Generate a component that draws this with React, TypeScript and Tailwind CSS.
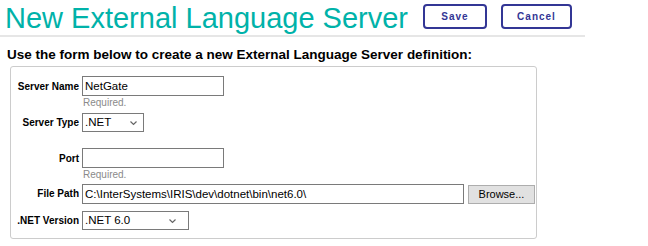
import React, { useState } from 'react';

const font = { fontFamily: '"Liberation Sans", Arial, sans-serif' };

function Chevron({ right }: { right: string }) {
  return (
    <svg
      className={`pointer-events-none absolute top-1/2 -translate-y-1/2 ${right}`}
      width="7"
      height="5"
      viewBox="0 0 7 5"
    >
      <path d="M0.5 1 L3.5 4 L6.5 1" fill="none" stroke="#666" strokeWidth="1.2" />
    </svg>
  );
}

function Label({ children }: { children: React.ReactNode }) {
  return (
    <div className="w-[68px] shrink-0 text-right text-[10px] font-bold text-black whitespace-nowrap">
      {children}
    </div>
  );
}

export default function App() {
  const [name, setName] = useState('NetGate');
  const [port, setPort] = useState('');
  const [path, setPath] = useState('C:\\InterSystems\\IRIS\\dev\\dotnet\\bin\\net6.0\\');

  return (
    <div className="w-[648px] h-[246px] bg-white overflow-hidden" style={font}>
      {/* header */}
      <div className="flex items-start w-[585px] h-[37px] border-b-2 border-[#e6e6e6]">
        <h1 className="pl-[5px] mt-[2px] text-[29px] leading-[32px] font-normal text-[#00b2a9] whitespace-nowrap">
          New External Language Server
        </h1>
        <div className="flex gap-[14px] ml-[15px] mt-[4px]">
          <button className="w-[64px] h-[25px] border-2 border-[#333695] rounded-[4px] text-[10px] font-bold tracking-[1px] text-[#333695] bg-white">
            Save
          </button>
          <button className="w-[71px] h-[25px] border-2 border-[#333695] rounded-[4px] text-[10px] font-bold tracking-[1px] text-[#333695] bg-white">
            Cancel
          </button>
        </div>
      </div>

      <p className="mt-[10px] pl-[7px] text-[13.5px] leading-[16px] font-bold text-black whitespace-nowrap">
        Use the form below to create a new External Language Server definition:
      </p>

      <div className="ml-[10px] mt-[3px] w-[527px] h-[173px] border border-[#cccccc] rounded-[3px] pt-[9px]">
        <div className="flex items-center gap-[3px]">
          <Label>Server Name</Label>
          <input
            value={name}
            onChange={e => setName(e.target.value)}
            className="block w-[142px] h-[20px] border border-[#7a7a7a] px-[2px] text-[11.5px] text-black outline-none"
          />
        </div>
        <div className="pl-[72px] h-[12px] leading-[13px] text-[10px] text-[#8a8a8a]">Required.</div>

        <div className="flex items-center gap-[3px] mt-[5px]">
          <Label>Server Type</Label>
          <div className="relative flex">
            <select className="block appearance-none w-[62px] h-[19px] border border-[#7a7a7a] bg-white pl-[2px] text-[11.5px] text-black outline-none">
              <option>.NET</option>
            </select>
            <Chevron right="right-[7px]" />
          </div>
        </div>

        <div className="flex items-center gap-[3px] mt-[16px]">
          <Label>Port</Label>
          <input
            value={port}
            onChange={e => setPort(e.target.value)}
            className="block w-[142px] h-[20px] border border-[#7a7a7a] px-[2px] text-[11.5px] text-black outline-none"
          />
        </div>
        <div className="pl-[72px] h-[12px] leading-[13px] text-[10px] text-[#8a8a8a]">Required.</div>

        <div className="flex items-center gap-[3px] mt-[3px]">
          <Label>File Path</Label>
          <input
            value={path}
            onChange={e => setPath(e.target.value)}
            className="block w-[382px] h-[20px] border border-[#7a7a7a] px-[2px] text-[11.5px] text-black outline-none"
          />
          <button className="block ml-[1px] mt-[2px] w-[67px] h-[19px] border border-[#adadad] bg-[#e1e1e1] text-[11px] text-black">
            Browse...
          </button>
        </div>

        <div className="flex items-center gap-[3px] mt-[7px]">
          <Label>.NET Version</Label>
          <div className="relative flex">
            <select className="block appearance-none w-[107px] h-[19px] border border-[#7a7a7a] bg-white pl-[2px] text-[11.5px] text-black outline-none">
              <option>.NET 6.0</option>
            </select>
            <Chevron right="right-[13px]" />
          </div>
        </div>
      </div>
    </div>
  );
}
